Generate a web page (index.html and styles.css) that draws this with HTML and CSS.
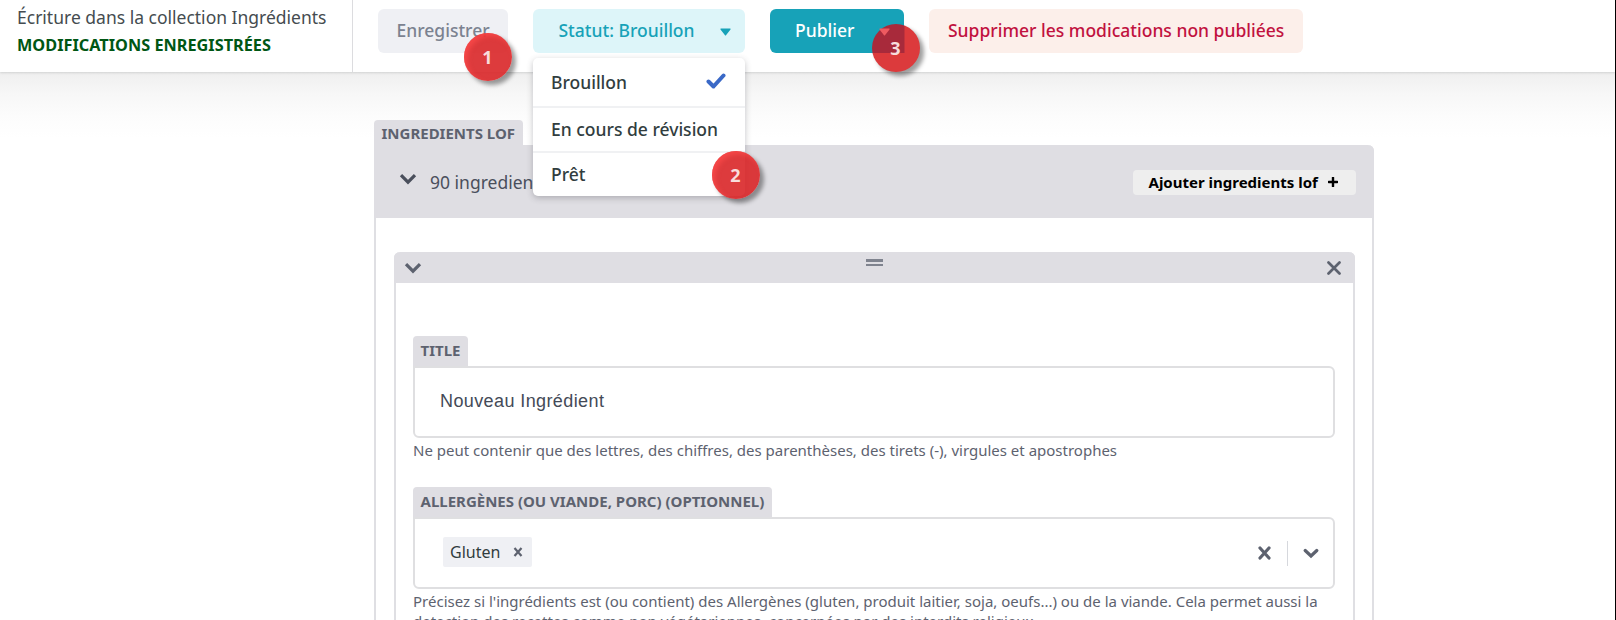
FILE: index.html
```html
<!DOCTYPE html>
<html lang="fr">
<head>
<meta charset="utf-8">
<title>Ingrédients</title>
<link rel="stylesheet" href="styles.css">
</head>
<body>
<div class="app">
  <header class="toolbar">
    <div class="status">
      <div class="status-title"><span>Écriture dans la collection Ingrédients</span></div>
      <div class="status-saved"><span>MODIFICATIONS ENREGISTRÉES</span></div>
    </div>
    <div class="actions">
      <div class="btn btn-save"><span>Enregistrer</span><i class="badge badge-1">1</i></div>
      <div class="btn btn-status"><span>Statut: Brouillon</span>
        <svg class="caret" width="11" height="8" viewBox="0 0 11 8"><path d="M1 .5h9q1 0 .5 1L6.200 7q-.7 1-1.400 0L.5 1.500Q0 .5 1 .5z" fill="currentColor"/></svg>
        <div class="menu">
          <div class="menu-item first"><span>Brouillon</span><svg class="check" width="20" height="17" viewBox="0 0 20 17"><path d="M2.500 8.500L7.500 13.500L17.500 2.500" fill="none" stroke="#3a69c7" stroke-width="4" stroke-linecap="round" stroke-linejoin="round"/></svg></div>
          <div class="menu-item"><span>En cours de révision</span></div>
          <div class="menu-item"><span>Prêt</span></div>
          <i class="badge badge-2">2</i>
        </div>
      </div>
      <div class="btn btn-publish"><span>Publier</span>
        <svg class="caret" width="11" height="8" viewBox="0 0 11 8"><path d="M1 .5h9q1 0 .5 1L6.200 7q-.7 1-1.400 0L.5 1.500Q0 .5 1 .5z" fill="currentColor"/></svg>
        <i class="badge badge-3">3</i>
      </div>
      <div class="btn btn-delete"><span>Supprimer les modications non publiées</span></div>
    </div>
  </header>
  <main class="content">
    <div class="label list-label"><span>INGREDIENTS LOF</span></div>
    <section class="list">
      <div class="list-head">
        <svg class="chev" width="18" height="12" viewBox="0 0 18 12"><path d="M2 2.200L9 9.200L16 2.200" fill="none" stroke="#4a4f5c" stroke-width="3.200"/></svg>
        <span class="count">90 ingredients</span>
        <div class="add"><span>Ajouter ingredients lof</span><svg width="10" height="10" viewBox="0 0 10 10"><path d="M5 .7v8.600M.7 5h8.600" stroke="#000" stroke-width="2.400" stroke-linecap="round"/></svg></div>
      </div>
      <article class="item">
        <div class="item-head">
          <svg class="chev" width="18" height="12" viewBox="0 0 18 12"><path d="M2 2.200L9 9.200L16 2.200" fill="none" stroke="#5d626f" stroke-width="3.200"/></svg>
          <span class="drag"></span>
          <svg class="close" width="14" height="14" viewBox="0 0 14 14"><path d="M1.500 1.500l11 11M12.500 1.500l-11 11" stroke="#5d626f" stroke-width="2.700" stroke-linecap="round"/></svg>
        </div>
        <div class="fields">
          <div class="label"><span>TITLE</span></div>
          <div class="control"><span class="value">Nouveau Ingrédient</span></div>
          <p class="hint hint-title"><span>Ne peut contenir que des lettres, des chiffres, des parenthèses, des tirets (-), virgules et apostrophes</span></p>
          <div class="label"><span>ALLERGÈNES (OU VIANDE, PORC) (OPTIONNEL)</span></div>
          <div class="control select">
            <div class="chip"><span>Gluten</span><svg width="10" height="10" viewBox="0 0 10 10"><path d="M1.500 1l7 8M8.500 1l-7 8" stroke="#5d626f" stroke-width="2.200"/></svg></div>
            <svg class="clear" width="13" height="14" viewBox="0 0 13 14"><path d="M2 2l9 10M11 2l-9 10" stroke="#5d626f" stroke-width="3.200" stroke-linecap="round"/></svg>
            <span class="divider"></span>
            <svg width="16" height="11" viewBox="0 0 16 11"><path d="M2.200 2.500L8 8L13.800 2.500" fill="none" stroke="#5d626f" stroke-width="3.200" stroke-linecap="round"/></svg>
          </div>
          <p class="hint"><span>Précisez si l'ingrédients est (ou contient) des Allergènes (gluten, produit laitier, soja, oeufs...) ou de la viande. Cela permet aussi la</span><br><span>detection des recettes comme non végétariennes, concernées par des interdits religieux.</span></p>
        </div>
      </article>
    </section>
  </main>
</div>
</body>
</html>
```
FILE: styles.css
```css
* { box-sizing: border-box; }
body { margin: 0; font-family: "Noto Sans", sans-serif; color: #313d3e; background: #fff; }
.app { height: 620px; overflow: hidden; border-right: 1px solid #000; display: flex; flex-direction: column; }
.toolbar { height: 72px; flex: none; display: flex; background: #fff; position: relative; z-index: 2; box-shadow: 0 1px 2px rgba(60,70,70,.16); }
.status { width: 353px; border-right: 1px solid #dcdcdf; padding: 4px 0 0 17px; white-space: nowrap; }
.status-title { font-size: 17.500px; line-height: 26px; color: #454c50; }
.status-saved { font-size: 16.300px; line-height: 30px; font-weight: 700; color: #005614; }
.actions { display: flex; padding: 9px 0 0 25px; }
.btn { height: 44px; border-radius: 6px; font-size: 17.500px; font-weight: 500; line-height: 42px; white-space: nowrap; position: relative; display: flex; }
.btn-save { width: 130px; padding-left: 18.500px; background: #eff0f4; color: #7b8290; margin-right: 25px; }
.btn-status { width: 212px; padding-left: 25.500px; background: #ddf5f9; color: #17a2b8; margin-right: 25px; }
.btn-publish { width: 134px; padding-left: 25px; background: #17a2b8; color: #fff; margin-right: 25px; }
.btn-delete { width: 374px; padding-left: 19px; background: #fcefea; color: #c1123f; }
.caret { margin: 19px 14px 0 auto; }
.btn-publish .caret { position: relative; z-index: 1; color: #ee5a60; }
.menu { position: absolute; left: 0; top: 49px; width: 212px; height: 138px; background: #fff; border-radius: 5px; color: #313d3e; box-shadow: 0 2px 6px rgba(60,60,70,.3); }
.menu-item { height: 45px; padding-left: 18px; line-height: 42px; border-top: 2px solid #f0f1f3; display: flex; }
.menu-item.first { height: 48px; line-height: 49px; border: 0; }
.check { margin: 15px 19px 0 auto; }
.badge { position: absolute; width: 48px; height: 48px; border-radius: 50%; background: rgba(217,38,40,.9); color: #f8dcdc; font: 700 18px/48px "Open Sans", sans-serif; text-align: center; box-shadow: 4px 4px 4px rgba(0,0,0,.38), inset 3px 3px 5px rgba(255,75,75,.75); }
.badge-1 { left: 85.500px; top: 24px; }
.badge-2 { left: 178.500px; top: 93px; }
.badge-3 { left: 101.500px; top: 15px; background: linear-gradient(#a82a3b, #a82a3b) 0 0 / 32.500px 29px no-repeat, #dc3a3c; box-shadow: 4px 4px 4px rgba(0,0,0,.38); }
.content { flex: 1; padding: 48px 0 0 374px; background: linear-gradient(#efefef, #f7f7f7 22px, #fcfcfc 44px, #fff 66px); }
.label { display: table; height: 30px; line-height: 28px; padding: 0 8px 0 7.500px; background: #dfdee3; border-radius: 4px 4px 0 0; color: #5d626f; font-size: 15px; font-weight: 700; white-space: nowrap; }
.list-label { height: 25px; line-height: 26px; margin-bottom: -1px; }
.list { width: 1000px; height: 500px; border: 2px solid #dfdfe3; border-top: 0; border-radius: 0 6px 0 0; background: #fff; }
.list-head { height: 73px; margin: 0 -2px; background: #dfdee3; border-radius: 0 6px 0 0; display: flex; align-items: center; padding: 0 18px 0 25px; }
.list-head .chev { margin: -5px 13px 0 0; }
.count { font-size: 17.500px; color: #4a4f5c; }
.add { margin: 1px 0 0 auto; width: 223px; height: 25px; border-radius: 4px; background: #eee; color: #000; font-size: 15px; line-height: 24px; font-weight: 700; padding-left: 15.500px; display: flex; align-items: center; gap: 10px; white-space: nowrap; }
.item { width: 961px; height: 500px; margin: 34px 0 0 18px; border: 2px solid #dfdfe3; border-top: 0; border-radius: 6px 6px 0 0; }
.item-head { height: 31px; margin: 0 -2px; padding: 0 14px 0 10px; background: #dfdee3; border-radius: 6px 6px 0 0; display: grid; grid-template-columns: 462px 17px 1fr; align-items: center; }
.item-head .chev { margin-top: 1px; }
.drag { height: 7px; border: solid #7f838e; border-width: 3px 0 2px; margin-top: -10px; }
.close { justify-self: end; }
.fields { padding: 53px 17px 0; }
.control { width: 922px; height: 72px; border: 2px solid #dfdfe1; border-radius: 0 6px 6px 6px; display: flex; align-items: center; padding-left: 25px; color: #444a57; }
.value { font: 18px "Liberation Sans", sans-serif; letter-spacing: .4px; margin-top: -1px; }
.hint { margin: 2px 0 0; font-size: 15px; line-height: 20px; color: #5d626f; white-space: nowrap; }
.hint-title { height: 47px; }
.select { padding: 0 14px 0 28px; }
.chip { width: 89px; height: 30px; border-radius: 2px; background: #eff0f4; color: #313d3e; font-size: 16px; line-height: 28px; display: flex; align-items: center; gap: 13px; padding-left: 7px; margin-top: -3px; }
.clear { margin-left: auto; }
.divider { width: 1px; height: 25px; background: #d6d8dd; margin: 0 15px 0 16px; }
```
